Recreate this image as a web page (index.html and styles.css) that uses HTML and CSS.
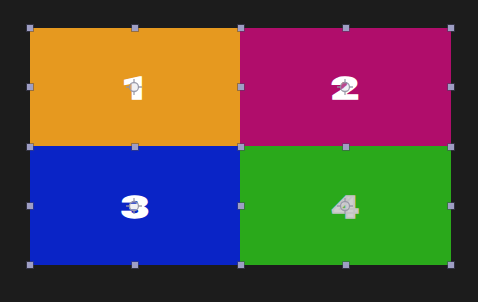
FILE: index.html
```html
<!DOCTYPE html>
<html>
<head>
<meta charset="utf-8">
<link rel="stylesheet" href="styles.css">
</head>
<body>
<div class="stage">
  <div class="board">
    <div class="grid">
      <div class="cell orange"><span class="num">1</span><svg class="target" viewBox="0 0 18 18"><circle cx="9" cy="9" r="4.5"/><path d="M9 1v4M9 13v4M1 9h4M13 9h4"/></svg></div>
      <div class="cell magenta"><span class="num">2</span><svg class="target" viewBox="0 0 18 18"><circle cx="9" cy="9" r="4.5"/><path d="M9 1v4M9 13v4M1 9h4M13 9h4"/></svg></div>
      <div class="cell blue"><span class="num">3</span><svg class="target" viewBox="0 0 18 18"><circle cx="9" cy="9" r="4.5"/><path d="M9 1v4M9 13v4M1 9h4M13 9h4"/></svg></div>
      <div class="cell green"><span class="num dim">4</span><svg class="target" viewBox="0 0 18 18"><circle cx="9" cy="9" r="4.5"/><path d="M9 1v4M9 13v4M1 9h4M13 9h4"/></svg></div>
    </div>
    <div class="handles">
      <i style="left:0%;top:0%"></i><i style="left:25%;top:0%"></i><i style="left:50%;top:0%"></i><i style="left:75%;top:0%"></i><i style="left:100%;top:0%"></i>
      <i style="left:0%;top:25%"></i><i style="left:50%;top:25%"></i><i style="left:100%;top:25%"></i>
      <i style="left:0%;top:50%"></i><i style="left:25%;top:50%"></i><i style="left:50%;top:50%"></i><i style="left:75%;top:50%"></i><i style="left:100%;top:50%"></i>
      <i style="left:0%;top:75%"></i><i style="left:50%;top:75%"></i><i style="left:100%;top:75%"></i>
      <i style="left:0%;top:100%"></i><i style="left:25%;top:100%"></i><i style="left:50%;top:100%"></i><i style="left:75%;top:100%"></i><i style="left:100%;top:100%"></i>
    </div>
  </div>
</div>
</body>
</html>
```
FILE: styles.css
```css
html, body {
  margin: 0;
  padding: 0;
  background: #1c1c1c;
  width: 478px;
  height: 302px;
  overflow: hidden;
}
.stage {
  padding: 28px 0 0 30px;
}
.board {
  position: relative;
  width: 421px;
  height: 237px;
}
.grid {
  display: grid;
  grid-template-columns: 210px 211px;
  grid-template-rows: 118px 119px;
  width: 100%;
  height: 100%;
}
.cell {
  position: relative;
  display: flex;
  align-items: center;
  justify-content: center;
}
.orange { background: #e6991f; }
.magenta { background: #b00d6b; }
.blue { background: #0a24c6; }
.green { background: #2aa91b; }
.num {
  font-family: Roboto, "Liberation Sans", sans-serif;
  font-weight: 900;
  font-size: 32px;
  line-height: 1;
  color: #ffffff;
  -webkit-text-stroke: 1.4px #ffffff;
  display: inline-block;
  transform: scaleX(1.5);
  margin-top: 2px;
}
.num.dim {
  color: #cfcfcf;
  -webkit-text-stroke: 1.4px #c4c4c4;
}
.target {
  position: absolute;
  left: 50%;
  top: 50%;
  width: 18px;
  height: 18px;
  margin: -9px 0 0 -10px;
  fill: rgba(210, 210, 220, 0.3);
  stroke: rgba(150, 150, 165, 0.9);
  stroke-width: 1.3;
}
.handles {
  position: absolute;
  inset: 0;
  pointer-events: none;
}
.handles i {
  position: absolute;
  width: 6px;
  height: 6px;
  margin: -3px 0 0 -3px;
  background: #9e9ec4;
  box-shadow: 0 0 0 1px rgba(70, 70, 100, 0.5);
}
```
